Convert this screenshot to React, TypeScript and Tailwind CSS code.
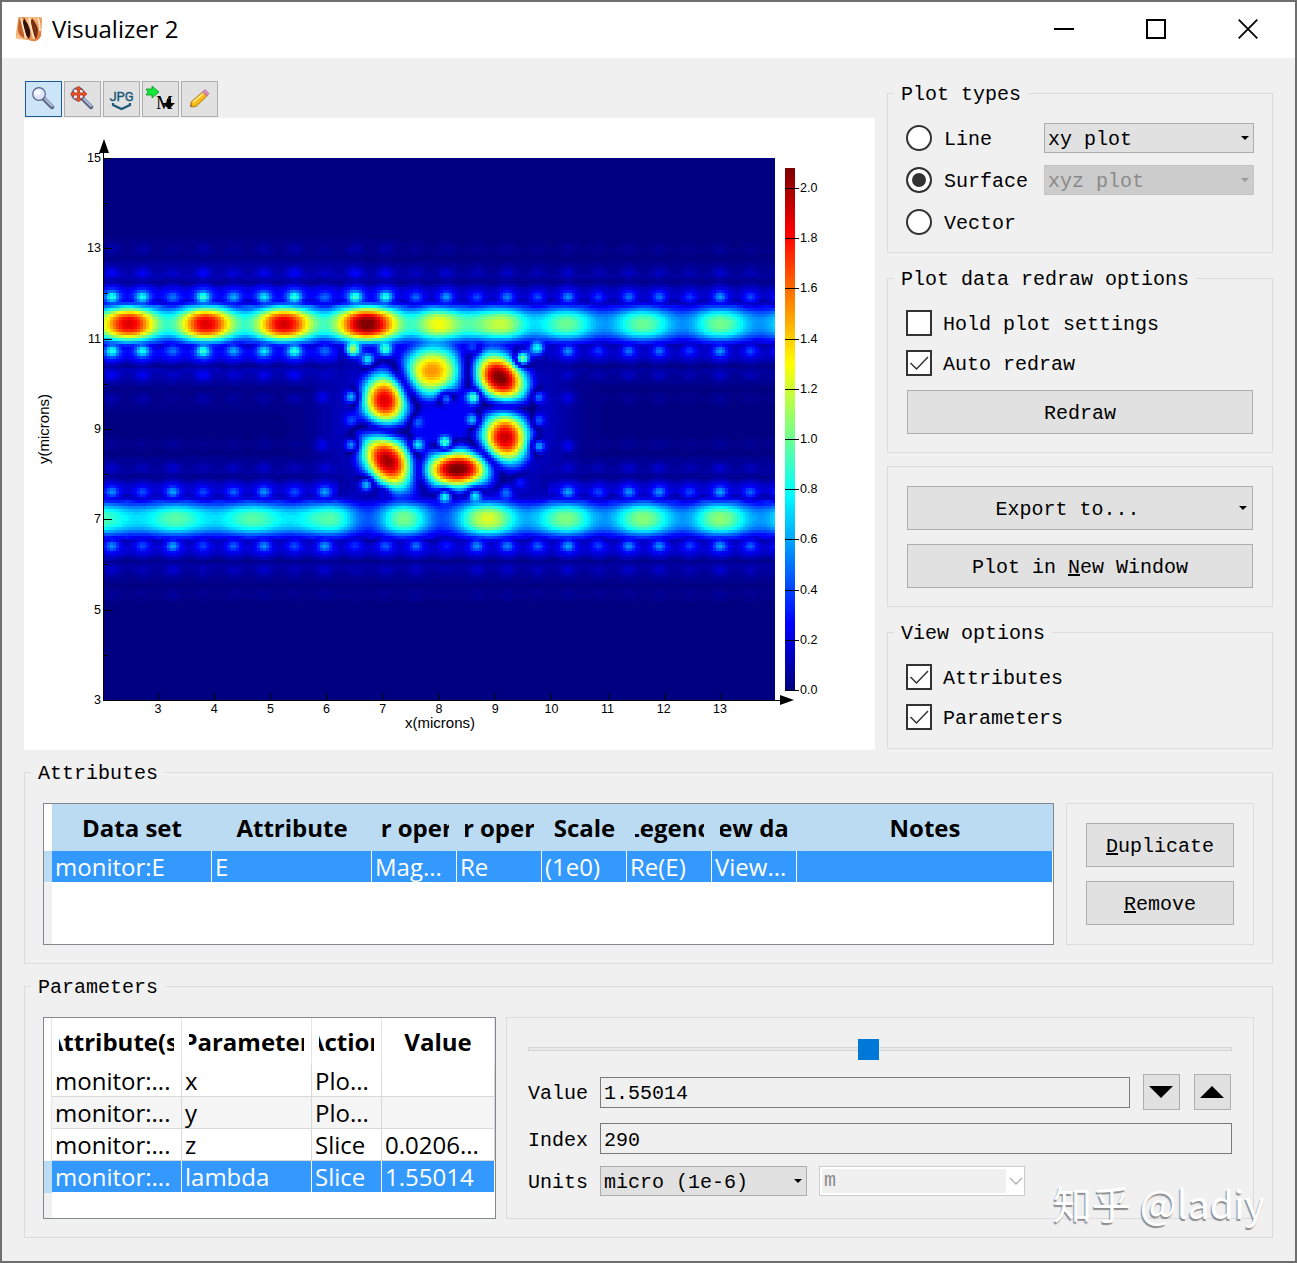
import { useState } from "react";
import type { ReactNode } from "react";

/* ---------- field data, in plot-area pixels (671 x 542) ---------- */

type Point = [number, number];
type Dot = [x: number, y: number, amp: number];
type Lobe = {
  x: number;
  y: number;
  rx: number;
  ry: number;
  angle: number;
  amp: number;
};

const PLOT_W = 671;
const PLOT_H = 542;
const CELL = 3;
const LEVELS = 96;
const MAX_VALUE = 2.08;

const topGuide: Point[] = [
  [-15, 0.9], [25, 1.88], [64, 0.9], [102, 1.88], [141, 0.9], [180, 1.9],
  [220, 0.92], [263, 2.1], [307, 0.9], [334, 1.28], [364, 0.95], [397, 1.18],
  [431, 0.72], [462, 1], [500, 0.58], [539, 1], [579, 0.56], [616, 1.02],
  [656, 0.57], [695, 0.98],
];

const bottomGuide: Point[] = [
  [-6, 0.95], [34, 0.72], [72, 0.96], [110, 0.72], [149, 0.96], [186, 0.74],
  [226, 0.96], [264, 0.44], [300, 1.02], [338, 0.42], [384, 1.22], [423, 0.62],
  [462, 1.04], [500, 0.58], [539, 1.06], [579, 0.58], [616, 1.07],
  [656, 0.58], [695, 1],
];

const topRow = [
  0.78, 0.74, 0.4, 0.82, 0.52, 0.66, 0.8, 0.38, 0.84, 0.78, 0.4, 0.52, 0.36,
  0.48, 0.36, 0.5, 0.32, 0.44, 0.44, 0.32, 0.52, 0.36, 0.42,
];

const bottomRow = [
  0.5, 0.36, 0.54, 0.34, 0.4, 0.5, 0.36, 0.54, 0.3, 0.4, 0.44, 0.24, 0.5,
  0.48, 0.4, 0.54, 0.34, 0.5, 0.5, 0.34, 0.54, 0.4, 0.44,
];

// Clockwise round the ring, so that neighbours have opposite phase
const lobes: Lobe[] = [
  { x: 281, y: 242, rx: 21, ry: 25, angle: 0, amp: 1.9 },
  { x: 328, y: 213, rx: 25, ry: 21, angle: -10, amp: 1.5 },
  { x: 396, y: 220, rx: 28, ry: 21, angle: 42, amp: 2.1 },
  { x: 401, y: 280, rx: 22, ry: 26, angle: 0, amp: 1.92 },
  { x: 354, y: 311, rx: 33, ry: 18, angle: -3, amp: 2.1 },
  { x: 284, y: 303, rx: 30, ry: 21, angle: 50, amp: 2 },
];

const ringDots: Dot[] = [
  [249, 191, 1.15], [281, 191, 0.9], [264, 202, 0.8], [370, 190, 0.5],
  [433, 190, 0.8], [418, 201, 1.3], [248, 239, 0.78], [342, 240, 0.85],
  [370, 239, 1.05], [369, 262, 0.8], [434, 239, 0.62], [434, 263, 0.55],
  [247, 263, 0.4], [313, 264, 0.5], [248, 287, 0.78], [313, 287, 0.85],
  [341, 285, 1.1], [434, 288, 0.78], [263, 326, 0.85], [279, 335, 0.45],
  [341, 338, 0.95], [371, 337, 0.88], [402, 335, 0.48], [416, 324, 0.34],
  [218, 239, 0.22], [218, 287, 0.22], [464, 240, 0.2], [464, 288, 0.22],
];

function along(points: Point[], x: number) {
  for (let i = 1; i < points.length; i++) {
    const [x1, y1] = points[i];
    if (x <= x1) {
      const [x0, y0] = points[i - 1];
      const t = (1 - Math.cos((Math.PI * (x - x0)) / (x1 - x0))) / 2;
      return y0 + (y1 - y0) * t;
    }
  }
  return points[points.length - 1][1];
}

const bump = (d: number, width: number) => Math.exp(-((d / width) ** 2));

function guideField(
  x: number,
  y: number,
  center: number,
  points: Point[],
  row: number[],
  glow: number,
) {
  const dy = Math.abs(y - center);
  if (dy > 110) return 0;
  const core = along(points, x) * Math.exp(-((dy / 17.5) ** 2.7));
  const phase = Math.cos((2 * Math.PI * (x - 8)) / 30.4);
  let side = dy > 16 ? glow * Math.exp(-(dy - 22) / 24) : 0;
  side *= 1 - 0.9 * bump(dy - 20 + phase * 1.5, 3.5);
  side *= 1 - 0.7 * bump(dy - 42 - phase, 3.5);
  side *= 1 - 0.6 * bump(dy - 66, 4);
  const i = Math.max(0, Math.min(row.length - 1, Math.round((x - 8) / 30.4)));
  const dx = x - 8 - i * 30.4;
  const insideRing = x > 235 && x < 445;
  const facingRing = center < 250 ? y > center : y < center;
  let dots = 0;
  if (insideRing && facingRing) {
    side *= 0.5;
  } else {
    dots += row[i] * bump(dx, 7.5) * bump(dy - 27, 6);
    dots += row[i] * 0.3 * bump(dx, 9) * bump(dy - 51, 7);
    dots += row[i] * 0.12 * bump(dx, 9) * bump(dy - 75, 7);
    // soft shoulder that falls away from the guide under each bright dot
    dots = Math.hypot(dots, row[i] * 0.42 * bump(dx, 14) * bump(dy - 31, 9));
  }
  return Math.hypot(core, side, dots);
}

function lobeRadius(lobe: Lobe, x: number, y: number) {
  const a = (lobe.angle * Math.PI) / 180;
  const u = (x - lobe.x) * Math.cos(a) + (y - lobe.y) * Math.sin(a);
  const v = (y - lobe.y) * Math.cos(a) - (x - lobe.x) * Math.sin(a);
  return Math.hypot(u / lobe.rx, v / lobe.ry);
}

// Each dot takes the phase opposite to that of the lobe it lies next to
const dotSigns = ringDots.map(([x, y]) => {
  const radii = lobes.map((lobe) => lobeRadius(lobe, x, y));
  return radii.indexOf(Math.min(...radii)) % 2 === 0 ? -1 : 1;
});

function ringField(x: number, y: number) {
  if (x < 170 || x > 520 || y < 150 || y > 370) return 0;
  let sum = 0;
  let haze = 0.24 * Math.exp(-(Math.hypot((x - 341) / 120, (y - 263) / 100) ** 4));
  lobes.forEach((lobe, i) => {
    const r = lobeRadius(lobe, x, y);
    const sign = i % 2 === 0 ? 1 : -1;
    sum += sign * lobe.amp * Math.exp(-Math.log(lobe.amp / 0.8) * r ** 2.25);
    haze *= 1 - 0.9 * bump(r - 1.55, 0.18);
  });
  ringDots.forEach(([dx, dy, amp], i) => {
    if (Math.abs(x - dx) < 20 && Math.abs(y - dy) < 20) {
      sum += dotSigns[i] * amp * bump(Math.hypot(x - dx, y - dy), 7.5);
    }
  });
  return Math.hypot(sum, haze);
}

function fieldAt(x: number, y: number) {
  const topGlow = 0.2 + 0.14 / (1 + Math.exp((x - 300) / 25));
  return Math.hypot(
    guideField(x, y, 166, topGuide, topRow, topGlow),
    guideField(x, y, 361, bottomGuide, bottomRow, 0.23),
    ringField(x, y),
  );
}

function jet(t: number) {
  const channel = (c: number) =>
    Math.round(255 * Math.max(0, Math.min(1, 1.5 - Math.abs(4 * t - c))));
  return `rgb(${channel(3)},${channel(2)},${channel(1)})`;
}

// One path per colour level, made of horizontal runs of equal cells
function buildLevels() {
  const paths: string[] = Array(LEVELS).fill("");
  for (let y = 0; y < PLOT_H; y += CELL) {
    const h = Math.min(CELL, PLOT_H - y);
    let start = 0;
    let current = -1;
    for (let x = 0; x < PLOT_W + CELL; x += CELL) {
      const level =
        x >= PLOT_W
          ? -2
          : Math.min(
              LEVELS - 1,
              Math.floor((fieldAt(x + 1.5, y + 1.5) / MAX_VALUE) * LEVELS),
            );
      if (level !== current) {
        if (current > 0) {
          const end = Math.min(x, PLOT_W);
          paths[current] += `M${start} ${y}h${end - start}v${h}h${start - end}z`;
        }
        start = x;
        current = level;
      }
    }
  }
  return paths;
}

const levelPaths = buildLevels();

const xTicks = [3, 4, 5, 6, 7, 8, 9, 10, 11, 12, 13];
const yTicks = [15, 13, 11, 9, 7, 5, 3];
const barTicks = [2.0, 1.8, 1.6, 1.4, 1.2, 1.0, 0.8, 0.6, 0.4, 0.2, 0.0];

const FieldPlot = () => (
  <svg
    viewBox="0 0 851 632"
    className="block w-full bg-white font-['Liberation_Sans',sans-serif]"
    role="img"
    aria-label="Field magnitude over x and y"
  >
    <g transform="translate(80 40)" shapeRendering="crispEdges">
      <rect width={PLOT_W} height={PLOT_H} fill={jet(0)} />
      {levelPaths.map((d, i) =>
        d ? <path key={i} d={d} fill={jet(i / (LEVELS - 1))} /> : null,
      )}
    </g>

    <g stroke="#000" shapeRendering="crispEdges">
      <path d="M79.500 30V582.500H760" fill="none" />
      {yTicks.map((tick, i) => (
        <path key={tick} d={`M80 ${Math.round(i * 90.3) + 40.5}h8`} />
      ))}
      {yTicks.slice(1).map((tick, i) => (
        <path key={tick} d={`M80 ${Math.round(i * 90.3) + 85.5}h4`} />
      ))}
      {xTicks.map((tick, i) => (
        <path key={tick} d={`M${Math.round(i * 56.2) + 134.5} 582v-7`} />
      ))}
    </g>
    <path d="M80 21l5 14H75zM770 582l-14-5v10z" />

    <g fontSize="12.5">
      {yTicks.map((tick, i) => (
        <text key={tick} x="77" y={i * 90.3 + 44} textAnchor="end">
          {tick}
        </text>
      ))}
      {xTicks.map((tick, i) => (
        <text key={tick} x={i * 56.2 + 134} y="595" textAnchor="middle">
          {tick}
        </text>
      ))}
    </g>
    <text x="416" y="610" fontSize="15" textAnchor="middle">
      x(microns)
    </text>
    <text
      transform="translate(25 311) rotate(-90)"
      fontSize="15"
      textAnchor="middle"
    >
      y(microns)
    </text>

    {Array.from({ length: 174 }, (_, i) => (
      <rect
        key={i}
        x="761"
        y={569 - i * 3}
        width="10"
        height="3"
        fill={jet(i / 173)}
        shapeRendering="crispEdges"
      />
    ))}
    {barTicks.map((tick, i) => (
      <g key={tick}>
        <path
          d={`M761 ${Math.round(i * 50.2) + 70.5}h14`}
          stroke="#000"
          shapeRendering="crispEdges"
        />
        <text x="776" y={i * 50.2 + 74} fontSize="12.5">
          {tick.toFixed(1)}
        </text>
      </g>
    ))}
  </svg>
);

/* ---------- toolbar icons ---------- */

const AppIcon = () => (
  <svg viewBox="0 0 28 26" className="h-[26px] w-7" aria-hidden="true">
    <defs>
      <linearGradient id="flame" x1="0" y1="0" x2="1" y2="0.6">
        <stop offset="0" stopColor="#dd7434" />
        <stop offset="0.45" stopColor="#ffc58c" />
        <stop offset="1" stopColor="#e07a3a" />
      </linearGradient>
    </defs>
    <path
      d="M5 1h20q2 0 2 3l-1 16q-1 3-5 5-4 1-7-1l-11-1Q0 23 1 18L3 4q0-3 2-3z"
      fill="url(#flame)"
    />
    <path d="M5 2q5 9 4 20-6-2-6-9 0-6 2-11z" fill="#c2602a" />
    <path d="M9 2q4 5 6 12 1 5-1 9-5-5-6-11-1-5 1-10z" fill="#35100a" />
    <path d="M17 2q5 6 6 12 0 5-2 9-4-5-5-11-1-6 1-10z" fill="#7a2e12" />
    <path
      d="M6 2q2 10 5 20M14 2q2 10 5 21M23 2q2 6 2 13"
      stroke="#ffe3c2"
      strokeWidth="1.8"
      fill="none"
    />
  </svg>
);

const Magnifier = ({ arrows = false }: { arrows?: boolean }) => (
  <svg viewBox="0 0 28 28" className="size-7" aria-hidden="true">
    <path d="M14 14l8 8" stroke="#56617f" strokeWidth="4.5" strokeLinecap="round" />
    <path d="M15 14l7 7" stroke="#a9b9d6" strokeWidth="2.200" strokeLinecap="round" />
    <circle cx="9" cy="9" r="6.300" fill="#dfe6fb" stroke="#5d6689" strokeWidth="1.2" />
    <circle cx="7.500" cy="7.500" r="3" fill="#fff" opacity="0.8" />
    {arrows && (
      <path
        d="M9.500 1l3 3.500h-2V8h4V6l3.500 3-3.500 3v-2h-4v3.500h2l-3 3.500-3-3.500h2V10h-4v2L1.500 9 5 6v2h3.500V4.500h-2z"
        fill="#f0522a"
        stroke="#b5330f"
        strokeWidth="0.8"
      />
    )}
  </svg>
);

const JpgIcon = () => (
  <svg viewBox="0 0 28 28" className="size-7" aria-hidden="true">
    <text
      x="13.5"
      y="16"
      textAnchor="middle"
      fontSize="13"
      fill="#1c5878"
      stroke="#1c5878"
      strokeWidth="0.4"
      className="font-['Roboto',sans-serif]"
    >
      JPG
    </text>
    <path d="M5 18v2l8.500 4 8.500-4v-2" fill="none" stroke="#1c5878" strokeWidth="2.2" />
  </svg>
);

const MatlabIcon = () => (
  <svg viewBox="0 0 32 28" className="h-7 w-8" aria-hidden="true">
    <path d="M1 4h6V1l7 6-7 6v-3H1l2-3z" fill="#14e83a" stroke="#0b8f20" strokeWidth="0.8" />
    <text x="11" y="24" fontSize="19" className="font-['Liberation_Serif',serif]">
      M
    </text>
    <path d="M22 14h4v4h4l-6 6-7-6h5z" />
  </svg>
);

const PencilIcon = () => (
  <svg viewBox="0 0 28 28" className="size-7" aria-hidden="true">
    <path d="M4 22l1-5 5 4.500z" fill="#8f5a1c" />
    <path d="M5 17L16.500 7l4.500 4-11 10.500-4.500.5z" fill="#f6b911" stroke="#a8700c" strokeWidth="0.8" />
    <path d="M7 17.500L17.500 8.500" stroke="#ffe27a" strokeWidth="1.8" />
    <path d="M16.500 7l2.500-2.500 4 4L21 11z" fill="#d98ab8" stroke="#a8608a" strokeWidth="0.6" />
  </svg>
);

const tools = [
  { name: "Zoom", icon: <Magnifier /> },
  { name: "Pan", icon: <Magnifier arrows /> },
  { name: "Export JPG", icon: <JpgIcon /> },
  { name: "Send to script", icon: <MatlabIcon /> },
  { name: "Edit", icon: <PencilIcon /> },
];

/* ---------- form controls ---------- */

const Caret = ({ className }: { className?: string }) => (
  <svg viewBox="0 0 8 4" className={`h-1 w-2 ${className ?? ""}`} aria-hidden="true">
    <path d="M0 0h8L4 4z" fill="currentColor" />
  </svg>
);

type GroupProps = { title: string; className?: string; children: ReactNode };

const Group = ({ title, className, children }: GroupProps) => (
  <fieldset className={`min-w-0 border border-[#dcdcdc] px-[18px] ${className ?? ""}`}>
    <legend className="-ml-3 h-6 px-[7px] leading-7">{title}</legend>
    {children}
  </fieldset>
);

type ButtonProps = { className?: string; children: ReactNode };

const Button = ({ className, children }: ButtonProps) => (
  <button
    type="button"
    className={`h-11 border border-[#adadad] bg-[#e1e1e1] pt-1 text-center ${className ?? ""}`}
  >
    {children}
  </button>
);

type SelectProps = { label: string; value: string; disabled?: boolean };

const Select = ({ label, value, disabled }: SelectProps) => (
  <div className="grid items-center">
    <select
      aria-label={label}
      disabled={disabled}
      className="col-start-1 row-start-1 h-[30px] w-full appearance-none border border-[#adadad] bg-[#e1e1e1] pt-1 pl-[3px] opacity-100 disabled:border-[#c4c4c4] disabled:bg-[#cccccc] disabled:text-[#8a8a8a]"
    >
      <option>{value}</option>
    </select>
    <Caret
      className={`pointer-events-none col-start-1 row-start-1 mr-[5px] justify-self-end ${
        disabled ? "text-[#9a9a9a]" : "text-black"
      }`}
    />
  </div>
);

type CheckProps = { label: string; defaultChecked?: boolean };

const Check = ({ label, defaultChecked }: CheckProps) => {
  const [checked, setChecked] = useState(!!defaultChecked);
  return (
    <label className="flex h-[26px] items-center gap-[11px]">
      <span className="grid">
        <input
          type="checkbox"
          checked={checked}
          onChange={() => setChecked(!checked)}
          className="col-start-1 row-start-1 size-[26px] appearance-none border-2 border-[#333333] bg-white"
        />
        {checked && (
          <svg
            viewBox="0 0 26 26"
            className="pointer-events-none col-start-1 row-start-1 size-[26px]"
            aria-hidden="true"
          >
            <path d="M4.500 13l6 6L22 7" fill="none" stroke="#333" strokeWidth="1.5" />
          </svg>
        )}
      </span>
      <span className="pt-1">{label}</span>
    </label>
  );
};

type RadioProps = {
  label: string;
  checked: boolean;
  onChange: () => void;
};

const Radio = ({ label, checked, onChange }: RadioProps) => (
  <label className="flex h-[30px] items-center gap-3">
    <input
      type="radio"
      name="plot-type"
      checked={checked}
      onChange={onChange}
      className="size-[26px] appearance-none rounded-full border-2 border-[#333333] bg-white checked:bg-[#333333] checked:shadow-[inset_0_0_0_4px_white]"
    />
    <span className="pt-1">{label}</span>
  </label>
);

/* ---------- panels ---------- */

const TitleBar = () => (
  <header className="flex h-14 items-center bg-white pr-px pb-[2px] pl-[13px]">
    <AppIcon />
    <h1 className="ml-[9px] flex-1 font-['Open_Sans',sans-serif] text-[24px]">
      Visualizer 2
    </h1>
    <button type="button" aria-label="Minimize" className="flex h-[54px] w-[92px] items-center justify-center">
      <span className="h-[2px] w-5 bg-black" />
    </button>
    <button type="button" aria-label="Maximize" className="flex h-[54px] w-[92px] items-center justify-center">
      <span className="size-5 border-2 border-black" />
    </button>
    <button type="button" aria-label="Close" className="flex h-[54px] w-[92px] items-center justify-center">
      <svg viewBox="0 0 20 20" className="size-5" aria-hidden="true">
        <path d="M.7.7l18.600 18.600M19.300.7L.7 19.300" stroke="#000" strokeWidth="1.8" />
      </svg>
    </button>
  </header>
);

const PlotTypes = () => {
  const [type, setType] = useState("Surface");
  return (
    <Group title="Plot types" className="pt-[18px] pb-[15px]">
      <div className="grid grid-cols-[1fr_210px] gap-y-3">
        <Radio label="Line" checked={type === "Line"} onChange={() => setType("Line")} />
        <Select label="Line plot" value="xy plot" />
        <Radio label="Surface" checked={type === "Surface"} onChange={() => setType("Surface")} />
        <Select label="Surface plot" value="xyz plot" disabled />
        <Radio label="Vector" checked={type === "Vector"} onChange={() => setType("Vector")} />
      </div>
    </Group>
  );
};

const SidePanel = () => (
  <aside className="flex flex-col gap-[13px]">
    <PlotTypes />
    <Group title="Plot data redraw options" className="pt-5 pb-[18px]">
      <div className="flex flex-col gap-[14px]">
        <Check label="Hold plot settings" />
        <Check label="Auto redraw" defaultChecked />
        <Button className="mx-px">Redraw</Button>
      </div>
    </Group>
    <div className="flex flex-col gap-[14px] border border-[#dcdcdc] px-[19px] pt-[19px] pb-[18px]">
      <Button className="flex items-center pr-[5px]">
        <span className="flex-1 pr-3">Export to...</span>
        <Caret className="mb-1" />
      </Button>
      <Button>
        Plot in <u>N</u>ew Window
      </Button>
    </div>
    <Group title="View options" className="pt-5 pb-[18px]">
      <div className="flex flex-col gap-[14px]">
        <Check label="Attributes" defaultChecked />
        <Check label="Parameters" defaultChecked />
      </div>
    </Group>
  </aside>
);

const HeadText = ({ children }: { children: ReactNode }) => (
  <div className="flex justify-center overflow-hidden leading-9 whitespace-nowrap">
    <span>{children}</span>
  </div>
);

const attributeColumns = [
  "Data set",
  "Attribute",
  "Vector operation",
  "Scalar operation",
  "Scale",
  "Legend",
  "View data",
  "Notes",
];

const attributeRow = ["monitor:E", "E", "Mag...", "Re", "(1e0)", "Re(E)", "View...", ""];

const AttributesTable = () => (
  <div className="flex min-w-0 flex-1 flex-col border border-[#82878f] bg-white font-['Open_Sans',sans-serif] text-[24px]">
    <table className="w-full table-fixed border-separate border-spacing-0">
      <colgroup>
        <col className="w-2" />
        <col className="w-40" />
        <col className="w-40" />
        <col className="w-[85px]" />
        <col className="w-[85px]" />
        <col className="w-[85px]" />
        <col className="w-[85px]" />
        <col className="w-[85px]" />
        <col />
      </colgroup>
      <thead>
        <tr className="h-[47px]">
          <td />
          {attributeColumns.map((column) => (
            <th key={column} className="bg-[#badbf2] px-2 font-bold">
              <HeadText>{column}</HeadText>
            </th>
          ))}
        </tr>
      </thead>
      <tbody>
        <tr className="h-8 leading-[31px] text-white">
          <td className="border-b border-white bg-[#badbf2]" />
          {attributeRow.map((cell, index) => (
            <td
              key={index}
              className="overflow-hidden border-r border-b border-white bg-[#3399ff] pl-[3px] whitespace-nowrap"
            >
              {cell}
            </td>
          ))}
        </tr>
      </tbody>
    </table>
    <div className="flex-1 border-l-8 border-[#f0f0f0]" />
  </div>
);

const parameterColumns = ["Attribute(s)", "Parameter", "Action", "Value"];

const parameterRows = [
  ["monitor:...", "x", "Plo...", ""],
  ["monitor:...", "y", "Plo...", ""],
  ["monitor:...", "z", "Slice", "0.0206..."],
  ["monitor:...", "lambda", "Slice", "1.55014"],
];

const rowStyles = [
  "bg-white border-[#d9d9d9]",
  "bg-[#f5f5f5] border-[#d9d9d9]",
  "bg-white border-[#d9d9d9]",
  "bg-[#3399ff] border-white text-white",
];

const ParametersTable = () => (
  <div className="flex w-[453px] shrink-0 flex-col border border-[#82878f] bg-white font-['Open_Sans',sans-serif] text-[24px]">
    <table className="w-full table-fixed border-separate border-spacing-0">
      <colgroup>
        <col className="w-2" />
        <col className="w-[130px]" />
        <col className="w-[130px]" />
        <col className="w-[70px]" />
        <col />
      </colgroup>
      <thead>
        <tr className="h-[47px]">
          <td className="border-r border-[#e5e5e5]" />
          {parameterColumns.map((column) => (
            <th key={column} className="border-r border-[#e5e5e5] px-[7px] font-bold">
              <HeadText>{column}</HeadText>
            </th>
          ))}
        </tr>
      </thead>
      <tbody>
        {parameterRows.map((row, index) => (
          <tr key={index} className="h-8 leading-[31px]">
            <td className={index === 3 ? "bg-[#badbf2]" : "border-r border-[#e5e5e5]"} />
            {row.map((cell, i) => (
              <td
                key={i}
                className={`overflow-hidden border-r border-b pl-[3px] whitespace-nowrap ${rowStyles[index]}`}
              >
                {cell}
              </td>
            ))}
          </tr>
        ))}
      </tbody>
    </table>
    <div className="flex-1 border-l-8 border-[#f0f0f0]" />
  </div>
);

const ParameterControls = () => {
  const [index, setIndex] = useState(290);
  return (
    <div className="flex min-w-0 flex-1 flex-col border border-[#dcdcdc] px-[21px] pt-5 pb-[22px]">
      <div className="grid items-center">
        <span className="col-start-1 row-start-1 h-1 border border-[#d6d6d6] bg-[#e7eaea]" />
        <input
          type="range"
          aria-label="Parameter position"
          min={1}
          max={600}
          value={index}
          onChange={(e) => setIndex(Number(e.target.value))}
          className="col-start-1 row-start-1 h-[22px] w-full appearance-none bg-transparent [&::-webkit-slider-thumb]:h-[21px] [&::-webkit-slider-thumb]:w-[21px] [&::-webkit-slider-thumb]:appearance-none [&::-webkit-slider-thumb]:bg-[#0078d7]"
        />
      </div>
      <div className="mt-[14px] mr-px flex items-center">
        <label htmlFor="value" className="mr-3 w-[60px] pt-1">
          Value
        </label>
        <input
          id="value"
          defaultValue="1.55014"
          className="h-[31px] min-w-0 flex-1 border border-[#7a7a7a] bg-transparent pt-[3px] pl-[3px]"
        />
        <button
          type="button"
          aria-label="Previous"
          className="ml-[13px] flex h-9 w-[37px] items-center justify-center border border-[#adadad] bg-[#e1e1e1] pr-[2px]"
        >
          <svg viewBox="0 0 24 12" className="h-3 w-6" aria-hidden="true">
            <path d="M0 0h24L12 12z" />
          </svg>
        </button>
        <button
          type="button"
          aria-label="Next"
          className="ml-[14px] flex h-9 w-[37px] items-center justify-center border border-[#adadad] bg-[#e1e1e1] pr-[2px]"
        >
          <svg viewBox="0 0 24 12" className="h-3 w-6" aria-hidden="true">
            <path d="M0 12h24L12 0z" />
          </svg>
        </button>
      </div>
      <div className="mt-[13px] flex items-center">
        <label htmlFor="index" className="mr-3 w-[60px] pt-1">
          Index
        </label>
        <input
          id="index"
          value={index}
          onChange={(e) => setIndex(Number(e.target.value))}
          className="h-[31px] min-w-0 flex-1 border border-[#7a7a7a] bg-transparent pt-[3px] pl-[3px]"
        />
      </div>
      <div className="mt-3 flex items-center">
        <span className="mr-3 w-[60px] pt-1">Units</span>
        <div className="w-[207px]">
          <Select label="Units" value="micro (1e-6)" />
        </div>
        <div className="ml-3 grid w-[206px] items-center border border-[#cccccc] bg-white">
          <select
            aria-label="Base unit"
            disabled
            className="col-start-1 row-start-1 m-[2px] mr-[18px] h-6 appearance-none bg-[#f0f0f0] pl-[2px] text-[#8a8a8a] opacity-100"
          >
            <option>m</option>
          </select>
          <svg
            viewBox="0 0 14 8"
            className="pointer-events-none col-start-1 row-start-1 mr-px h-2 w-[14px] justify-self-end"
            aria-hidden="true"
          >
            <path d="M1 1l6 6 6-6" fill="none" stroke="#b0b0b0" strokeWidth="1.3" />
          </svg>
        </div>
      </div>
    </div>
  );
};

export default function App() {
  return (
    <div className="relative flex min-h-screen flex-col border-2 border-[#6e6e6e] bg-[#f0f0f0] font-['Liberation_Mono',monospace] text-[20px] leading-6 text-black">
      <TitleBar />
      <main className="flex flex-col gap-[10px] px-[22px] pt-[23px] pb-[22px]">
        <div className="grid grid-cols-[1fr_386px] gap-3">
          <section>
            <div className="mb-px flex gap-[2px] pl-px">
              {tools.map((tool, index) => (
                <button
                  key={tool.name}
                  type="button"
                  aria-label={tool.name}
                  className={`flex h-9 w-[37px] items-center justify-center border ${
                    index === 0
                      ? "border-[#1b5a94] bg-[#cce4f7]"
                      : "border-[#adadad] bg-[#e1e1e1]"
                  }`}
                >
                  {tool.icon}
                </button>
              ))}
            </div>
            <FieldPlot />
          </section>
          <SidePanel />
        </div>

        <Group title="Attributes" className="pt-[19px] pb-[18px]">
          <div className="flex h-[142px] gap-3">
            <AttributesTable />
            <div className="flex w-[188px] shrink-0 flex-col gap-[14px] border border-[#dcdcdc] px-[19px] pt-[19px]">
              <Button>
                <u>D</u>uplicate
              </Button>
              <Button>
                <u>R</u>emove
              </Button>
            </div>
          </div>
        </Group>

        <Group title="Parameters" className="pt-[19px] pb-[18px]">
          <div className="flex gap-[10px]">
            <ParametersTable />
            <ParameterControls />
          </div>
        </Group>
      </main>
      <p className="pointer-events-none absolute right-[30px] bottom-[33px] font-['Noto_Sans_CJK_SC',sans-serif] text-[39px] leading-[52px] text-white [text-shadow:-1px_2px_1px_#8c8c8c]">
        知乎 @ladiy
      </p>
    </div>
  );
}
